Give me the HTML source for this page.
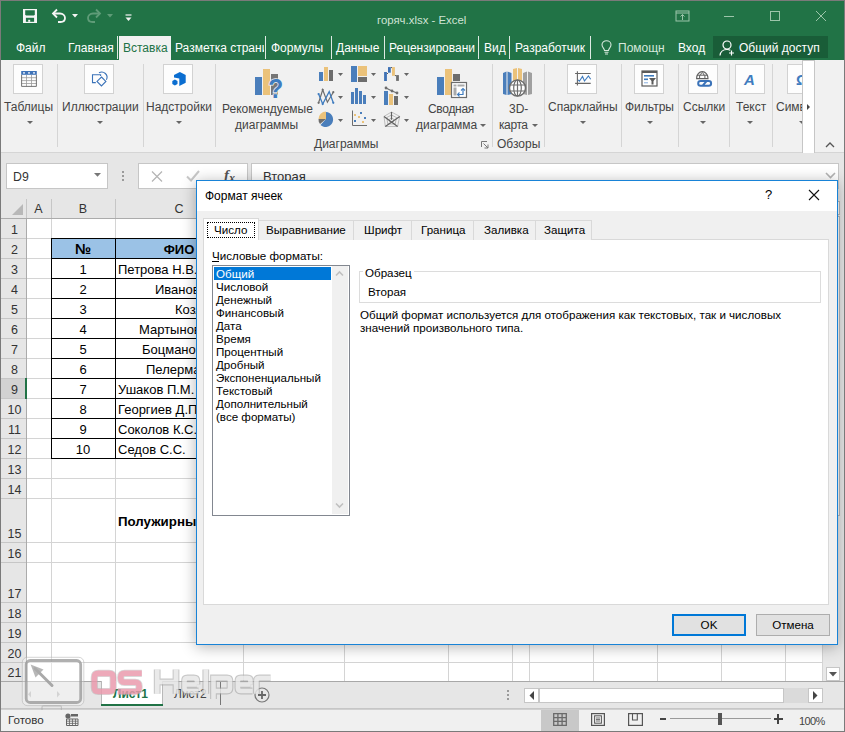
<!DOCTYPE html>
<html><head><meta charset="utf-8">
<style>
*{box-sizing:border-box;margin:0;padding:0}
html,body{width:845px;height:732px;overflow:hidden;background:#fff}
body{position:relative;font-family:"Liberation Sans",sans-serif;font-size:12px;color:#222}
.a{position:absolute}
.t{position:absolute;white-space:nowrap;line-height:1}
/* title */
#title{left:0;top:0;width:845px;height:60px;background:#217346}
.tab{position:absolute;top:41px;color:#fff;font-size:12px;white-space:nowrap;line-height:14px}
.tsep{position:absolute;top:36px;width:1px;height:23px;background:#fff;opacity:.85}
/* ribbon */
#ribbon{left:0;top:60px;width:845px;height:93px;background:#f1f1f1;border-bottom:1px solid #d5d5d5}
.ibox{position:absolute;top:6px;width:30px;height:30px;background:#fdfdfd;border:1px solid #d2d2d2}
.rsep{position:absolute;top:6px;width:1px;height:83px;background:#d5d5d5}
.rl{position:absolute;color:#444;font-size:12px;white-space:nowrap;line-height:14px;text-align:center}
.dd{position:absolute;width:0;height:0;border-left:3px solid transparent;border-right:3px solid transparent;border-top:3px solid #666}
/* grid */
.hl{position:absolute;height:1px;background:#d4d4d4}
.vl{position:absolute;width:1px;background:#d4d4d4}
.rh{position:absolute;left:1px;width:25px;background:#e6e6e6;color:#333;font-size:13px;text-align:center;border-bottom:1px solid #c8c8c8;border-right:1px solid #b8b8b8}
.cell{position:absolute;font-size:13px;color:#000;white-space:nowrap;line-height:14px}
/* dialog */
#dlg{left:196px;top:180px;width:642px;height:464px;background:#f0f0f0;border:1px solid #1883d7;box-shadow:0 0 10px rgba(0,0,0,.28)}
.dt{position:absolute;font-size:11.6px;color:#000;white-space:nowrap;line-height:13px}
.dtab{position:absolute;top:39px;height:20px;background:#f0f0f0;border:1px solid #d9d9d9;border-bottom:none;font-size:11.6px;color:#000;text-align:center;line-height:18px}
</style></head><body>

<!-- TITLE BAR -->
<div id="title" class="a"></div>

<div class="t" style="left:377px;top:13px;color:#cfe3d5;font-size:11.4px;line-height:14px">горяч.xlsx - Excel</div>
<svg class="a" style="left:23px;top:9px" width="14" height="14" viewBox="0 0 14 14"><rect x="0" y="0" width="14" height="14" fill="#f6f6f6"/><path d="M2.2 1.2H11.8V5.6L11 6.4H3L2.2 5.6Z" fill="#217346"/><rect x="2.9" y="8.8" width="8.2" height="4" fill="#217346"/><rect x="5.2" y="10.8" width="2" height="2" fill="#f6f6f6"/></svg>
<svg class="a" style="left:51px;top:8px" width="16" height="15" viewBox="0 0 16 15"><path d="M2 5.5H9C12 5.5 14 7.5 14 10C14 12.5 12 14 9.5 14H7" fill="none" stroke="#f4f4f4" stroke-width="1.8"/><path d="M6 1.5L2 5.5L6 9.5" fill="none" stroke="#f4f4f4" stroke-width="1.8"/></svg>
<svg class="a" style="left:72px;top:14px" width="6" height="4" viewBox="0 0 6 4"><path d="M0 0H6L3 3.5Z" fill="#f4f4f4"/></svg>
<svg class="a" style="left:86px;top:8px" width="16" height="15" viewBox="0 0 16 15"><path d="M14 5.5H7C4 5.5 2 7.5 2 10C2 12.5 4 14 6.5 14H9" fill="none" stroke="#5f9c78" stroke-width="1.8"/><path d="M10 1.5L14 5.5L10 9.5" fill="none" stroke="#5f9c78" stroke-width="1.8"/></svg>
<svg class="a" style="left:107px;top:14px" width="6" height="4" viewBox="0 0 6 4"><path d="M0 0H6L3 3.5Z" fill="#5f9c78"/></svg>
<svg class="a" style="left:125px;top:14px" width="7" height="8" viewBox="0 0 7 8"><path d="M0.5 1H6.5" stroke="#f4f4f4" stroke-width="1.2"/><path d="M0.5 3.5H6.5L3.5 7Z" fill="#f4f4f4"/></svg>
<svg class="a" style="left:675px;top:10px" width="15" height="12" viewBox="0 0 15 12"><rect x="1" y="1" width="13" height="10" fill="none" stroke="#9cc5aa" stroke-width="1"/><path d="M1 3H14M7.5 10V4.5M5.5 6.5L7.5 4.5L9.5 6.5" fill="none" stroke="#9cc5aa" stroke-width="1"/></svg>
<div class="a" style="left:724px;top:16px;width:10px;height:1px;background:#9cc5aa"></div>
<div class="a" style="left:770px;top:11px;width:10px;height:10px;border:1px solid #9cc5aa"></div>
<svg class="a" style="left:815px;top:10px" width="12" height="12" viewBox="0 0 12 12"><path d="M1 1L11 11M11 1L1 11" stroke="#9cc5aa" stroke-width="1"/></svg>

<!-- tabs -->
<div class="tab" style="left:16px">Файл</div>
<div class="tab" style="left:68px">Главная</div>
<div class="tsep" style="left:117px"></div>
<div class="a" style="left:119px;top:36px;width:52px;height:24px;background:#f1f1f1"></div>
<div class="tab" style="left:123px;color:#217346">Вставка</div>
<div class="tab" style="left:175px;width:89px;overflow:hidden">Разметка страницы</div>
<div class="tsep" style="left:265px"></div>
<div class="tab" style="left:271px">Формулы</div>
<div class="tsep" style="left:331px"></div>
<div class="tab" style="left:336px">Данные</div>
<div class="tsep" style="left:384px"></div>
<div class="tab" style="left:389px;width:86px;overflow:hidden">Рецензирование</div>
<div class="tsep" style="left:478px"></div>
<div class="tab" style="left:484px">Вид</div>
<div class="tsep" style="left:509px"></div>
<div class="tab" style="left:515px">Разработчик</div>
<div class="tsep" style="left:590px"></div>
<svg class="a" style="left:601px;top:40px" width="11" height="15" viewBox="0 0 11 15"><path d="M3.5 10.5C3.5 8.5 1 7.5 1 4.8C1 2.5 3 0.8 5.5 0.8C8 0.8 10 2.5 10 4.8C10 7.5 7.5 8.5 7.5 10.5Z" fill="none" stroke="#d6e8dc" stroke-width="1.1"/><path d="M3.5 12.3H7.5M4 14H7" stroke="#d6e8dc" stroke-width="1.1"/></svg>
<div class="tab" style="left:618px;color:#d6e8dc">Помощн</div>
<div class="tab" style="left:678px">Вход</div>
<div class="a" style="left:713px;top:36px;width:115px;height:22px;background:#195d38"></div>
<svg class="a" style="left:719px;top:40px" width="17" height="16" viewBox="0 0 17 16"><circle cx="8" cy="5" r="4" fill="none" stroke="#fff" stroke-width="1.2"/><path d="M1 15.5C1.5 11.5 4 9.5 8 9.5C9.5 9.5 10.5 9.8 11.3 10.3" fill="none" stroke="#fff" stroke-width="1.2"/><path d="M12.5 10.5V15.5M10 13H15" stroke="#fff" stroke-width="1.2"/></svg>
<div class="tab" style="left:739px">Общий доступ</div>

<!-- RIBBON -->
<div id="ribbon" class="a"></div>
<!-- ribbon groups -->
<div class="ibox" style="left:13px;top:64px"></div>
<svg class="a" style="left:16px;top:66px" width="26" height="26" viewBox="0 0 26 26"><rect x="5.2" y="5" width="15.6" height="3.8" fill="#3f73b8"/><rect x="7" y="6.3" width="2" height="1.2" fill="#fff"/><rect x="12" y="6.3" width="2" height="1.2" fill="#fff"/><rect x="17" y="6.3" width="2" height="1.2" fill="#fff"/><path d="M10.5 8.8V20.4M15.5 8.8V20.4M5.6 11.7H20.4M5.6 14.6H20.4M5.6 17.5H20.4" stroke="#9a9a9a" stroke-width="0.8"/><path d="M5.6 8.8V20.4H20.4V8.8" fill="none" stroke="#646464" stroke-width="0.9"/></svg>
<div class="rl" style="left:4px;top:100px">Таблицы</div>
<div class="dd" style="left:27px;top:121px"></div>
<div class="rsep" style="left:57px;top:64px"></div>

<div class="ibox" style="left:84px;top:64px"></div>
<svg class="a" style="left:86px;top:66px" width="26" height="26" viewBox="0 0 26 26"><path d="M9.8 16.6H6.5V8.7H14.6V10" fill="none" stroke="#3a72b8" stroke-width="1.1"/><path d="M13 6.8A5.3 5.3 0 0 1 20.4 13.8" fill="none" stroke="#3a72b8" stroke-width="1.1"/><path d="M15.45 11L19.9 15.45L15.45 19.9L11 15.45Z" fill="none" stroke="#3a72b8" stroke-width="1.1"/></svg>
<div class="rl" style="left:62px;top:100px">Иллюстрации</div>
<div class="dd" style="left:97px;top:121px"></div>
<div class="rsep" style="left:143px;top:64px"></div>

<div class="ibox" style="left:163px;top:64px"></div>
<svg class="a" style="left:166px;top:66px" width="26" height="26" viewBox="0 0 26 26"><path d="M13.9 6L19.7 9.1V16.7L13.3 19.9V12.4L8 11.6V9.1Z" fill="#0a6dd0"/><path d="M8.9 13.5L11.5 15V18L8.9 19.5L6.3 18V15Z" fill="#0a6dd0"/></svg>
<div class="rl" style="left:146px;top:100px">Надстройки</div>
<div class="dd" style="left:176px;top:121px"></div>
<div class="rsep" style="left:215px;top:64px"></div>

<!-- recommended charts -->
<svg class="a" style="left:254px;top:68px" width="32" height="32" viewBox="0 0 32 32"><rect x="1" y="9" width="7" height="18" fill="#4a7ebb"/><rect x="9" y="1" width="7" height="26" fill="#ebc27a"/><rect x="17" y="6" width="7" height="21" fill="#767676"/><text x="14.2" y="30" textLength="15" lengthAdjust="spacingAndGlyphs" font-family="Liberation Sans" font-weight="bold" font-size="27" fill="#3f7cbf" stroke="#f1f1f1" stroke-width="1.5" paint-order="stroke">?</text></svg>
<div class="rl" style="left:222px;top:102px">Рекомендуемые</div>
<div class="rl" style="left:235px;top:118px">диаграммы</div>

<svg class="a" style="left:316px;top:64px" width="100" height="66" viewBox="0 0 100 66">
 <rect x="3" y="8" width="4" height="9" fill="#4a7ebb"/><rect x="8" y="3" width="4" height="14" fill="#ebc27a"/><rect x="13" y="6" width="4" height="11" fill="#6d6d6d"/>
 <path d="M22 9h5l-2.5 3z" fill="#666"/>
 <rect x="35" y="2" width="6" height="16" fill="#4a7ebb"/><rect x="42" y="2" width="9" height="10" fill="#ebc27a"/><rect x="42" y="13" width="9" height="5" fill="#6d6d6d"/>
 <path d="M55 9h5l-2.5 3z" fill="#666"/>
 <path d="M70.9 9.5H72M74.8 3.6H76M78.9 11.6H80" stroke="#555" stroke-width="1"/><rect x="68.1" y="8" width="2.8" height="9" fill="#3f72b5"/><rect x="72" y="3.1" width="2.8" height="5.6" fill="#3f72b5"/><rect x="76" y="3.1" width="2.9" height="8.7" fill="#ebc27a"/><rect x="80.1" y="11.1" width="2.8" height="5.8" fill="#6d6d6d"/>
 <path d="M88 9h5l-2.5 3z" fill="#666"/>
 <path d="M2.6 38.8L6.7 25.8L11.4 38.2L17.3 28.2" fill="none" stroke="#6d6d6d" stroke-width="1.2"/><path d="M2.6 30L6.7 40L13.2 27.6L17.3 38.8" fill="none" stroke="#3f7cbf" stroke-width="1.3"/><circle cx="2.6" cy="38.8" r="1.1" fill="#6d6d6d"/><circle cx="6.7" cy="25.8" r="1.1" fill="#6d6d6d"/><circle cx="17.3" cy="28.2" r="1.1" fill="#6d6d6d"/><circle cx="2.6" cy="30" r="1.1" fill="#3f7cbf"/><circle cx="6.7" cy="40" r="1.1" fill="#3f7cbf"/><circle cx="17.3" cy="38.8" r="1.1" fill="#3f7cbf"/>
 <path d="M22 32h5l-2.5 3z" fill="#666"/>
 <rect x="35" y="28" width="3" height="12" fill="#4a7ebb"/><rect x="39" y="24" width="3" height="16" fill="#4a7ebb"/><rect x="43" y="27" width="3" height="13" fill="#4a7ebb"/><rect x="47" y="31" width="3" height="9" fill="#4a7ebb"/>
 <path d="M55 32h5l-2.5 3z" fill="#666"/>
 <rect x="68" y="27" width="4" height="14" fill="#4a7ebb"/><rect x="73" y="30" width="4" height="11" fill="#ebc27a"/><rect x="78" y="32" width="4" height="9" fill="#6d6d6d"/><path d="M70 24L76 27L81 29" fill="none" stroke="#6d6d6d" stroke-width="1.3"/><circle cx="70" cy="24" r="1.4" fill="#6d6d6d"/><circle cx="76" cy="27" r="1.4" fill="#6d6d6d"/><circle cx="81" cy="29" r="1.4" fill="#6d6d6d"/>
 <path d="M88 32h5l-2.5 3z" fill="#666"/>
 <path d="M10 55L10 48A7.5 7.5 0 1 1 4.5 61Z" fill="#4a7ebb"/><path d="M10 55L2.5 55A7.5 7.5 0 0 1 10 47.5Z" fill="#ebc27a"/><path d="M10 55L4 60A7.5 7.5 0 0 1 2.5 55Z" fill="#6d6d6d"/>
 <path d="M22 55h5l-2.5 3z" fill="#666"/>
 <path d="M36.5 46.5V61.5H51" fill="none" stroke="#6d6d6d" stroke-width="1"/><rect x="38" y="50" width="2" height="2" fill="#ebc27a"/><rect x="44" y="48" width="2" height="2" fill="#4a7ebb"/><rect x="42" y="52" width="2" height="2" fill="#ebc27a"/><rect x="48" y="53" width="2" height="2" fill="#4a7ebb"/><rect x="38" y="56" width="2" height="2" fill="#4a7ebb"/><rect x="46" y="57" width="2" height="2" fill="#ebc27a"/>
 <path d="M55 55h5l-2.5 3z" fill="#666"/>
 <path d="M75.5 48L83.7 52.4L81.6 62.5H69.3L68 52.4Z" fill="none" stroke="#b0b0b0" stroke-width=".8"/><path d="M75.5 51L80.5 53.5L79.2 60H71.8L70.8 53.5Z M75.5 54L77.8 55.3L77.2 58H73.8L73.3 55.3Z" fill="none" stroke="#a0a0a0" stroke-width=".7"/><path d="M75.5 48V55.8M68 52.4L81.6 62.5M83.7 52.4L69.3 62.5" stroke="#606060" stroke-width="1.2"/>
 <path d="M88 55h5l-2.5 3z" fill="#666"/>
</svg>
<div class="rl" style="left:314px;top:137px">Диаграммы</div>

<!-- pivot chart -->
<svg class="a" style="left:436px;top:68px" width="32" height="31" viewBox="0 0 32 31"><rect x="1" y="9" width="7" height="18" fill="#4a7ebb"/><rect x="9" y="1" width="7" height="26" fill="#ebc27a"/><rect x="17" y="6" width="7" height="7" fill="#6d6d6d"/><rect x="15.5" y="14.5" width="15" height="15" fill="#fff" stroke="#6d6d6d" stroke-width="1.2"/><rect x="17.5" y="16.5" width="3" height="2" fill="#aaa"/><rect x="21.5" y="16.5" width="7" height="2" fill="#aaa"/><rect x="17.5" y="19.5" width="3" height="8" fill="#aaa"/><path d="M22 26.5H27V21" fill="none" stroke="#3f7cbf" stroke-width="1.2"/><path d="M25 22.5l2-2 2 2M23.5 24.5l-2 2 2 2" fill="none" stroke="#3f7cbf" stroke-width="1.1"/></svg>
<div class="rl" style="left:428px;top:102px;letter-spacing:-0.3px">Сводная</div>
<div class="rl" style="left:416px;top:118px">диаграмма</div>
<div class="dd" style="left:480px;top:124px"></div>
<svg class="a" style="left:481px;top:141px" width="8" height="8" viewBox="0 0 8 8"><path d="M0.5 6V0.5H6" fill="none" stroke="#777" stroke-width="1"/><path d="M2.5 2.5L7 7M7 3.5V7H3.5" fill="none" stroke="#777" stroke-width="1"/></svg>
<div class="rsep" style="left:492px;top:64px"></div>

<!-- 3D map -->
<svg class="a" style="left:502px;top:67px" width="32" height="30" viewBox="0 0 32 30"><path d="M1 6L4.5 4.5V28L1 27Z M5.5 4.5L9.5 6V27L5.5 28Z" fill="#4a7ebb"/><path d="M11 2L15 1V16L11 16Z M16 1L20 2V16H16Z" fill="#ebc27a"/><path d="M21 6L25 4.5V28L21 27Z M26 4.5L30 6V27L26 28Z" fill="#a0a0a0"/><circle cx="15.5" cy="21" r="8" fill="#fff" stroke="#6d6d6d" stroke-width="1.4"/><ellipse cx="15.5" cy="21" rx="3.8" ry="8" fill="none" stroke="#6d6d6d" stroke-width="1.2"/><path d="M7.5 18H23.5M7.5 24H23.5M15.5 13V29" stroke="#6d6d6d" stroke-width="1.2"/></svg>
<div class="rl" style="left:509px;top:102px">3D-</div>
<div class="rl" style="left:499px;top:118px;letter-spacing:-0.4px">карта</div>
<div class="dd" style="left:532px;top:124px"></div>
<div class="rl" style="left:497px;top:137px">Обзоры</div>
<div class="rsep" style="left:544px;top:64px"></div>

<div class="ibox" style="left:567px;top:64px"></div>
<svg class="a" style="left:568px;top:66px" width="28" height="26" viewBox="0 0 28 26"><path d="M9.4 5.2V19.5M7.1 7.5H22.7M7.1 17.4H22.7" stroke="#666" stroke-width="1.1"/><path d="M10 13.8L11.4 15.2L14.5 10.5L16.5 15L20.4 10L22.7 13.3" fill="none" stroke="#3f7cbf" stroke-width="1.1"/></svg>
<div class="rl" style="left:548px;top:100px">Спарклайны</div>
<div class="dd" style="left:580px;top:121px"></div>
<div class="rsep" style="left:621px;top:64px"></div>

<div class="ibox" style="left:634px;top:64px"></div>
<svg class="a" style="left:641px;top:70px" width="17" height="17" viewBox="0 0 17 17"><rect x="1" y="1" width="15" height="15" fill="#fff" stroke="#5a5a5a" stroke-width="1.2"/><rect x="1" y="1" width="15" height="2" fill="#5a5a5a"/><rect x="3" y="5" width="10" height="1.6" fill="#3f7cbf"/><rect x="3" y="8.5" width="4" height="1.6" fill="#3f7cbf"/><rect x="3" y="12" width="4" height="1.4" fill="#a9c5e8"/><path d="M8 8H15L12.5 11V14.5H10.5V11Z" fill="#5a5a5a"/></svg>
<div class="rl" style="left:625px;top:100px">Фильтры</div>
<div class="dd" style="left:647px;top:121px"></div>
<div class="rsep" style="left:678px;top:64px"></div>

<div class="ibox" style="left:688px;top:64px"></div>
<svg class="a" style="left:692px;top:66px" width="24" height="24" viewBox="0 0 24 24"><path d="M4.6 12.6A5.7 7 0 0 1 16 12.6Z" fill="none" stroke="#606060" stroke-width="1.1"/><path d="M4.8 9.2H15.8M7.6 9.2V12.6M12.9 9.2V12.6M8.4 9.2Q10.3 4 12.1 9.2" fill="none" stroke="#606060" stroke-width="1"/><path d="M8.6 15.1H16.7Q19.1 15.1 19.1 17.4Q19.1 19.7 16.7 19.7H8.6Q6.2 19.7 6.2 17.4Q6.2 15.1 8.6 15.1Z M10.6 19.7L14.6 15.1" fill="none" stroke="#3a72b8" stroke-width="2"/></svg>
<div class="rl" style="left:683px;top:100px">Ссылки</div>
<div class="dd" style="left:700px;top:121px"></div>
<div class="rsep" style="left:729px;top:64px"></div>

<div class="ibox" style="left:735px;top:64px"></div>
<div class="t" style="left:744px;top:72px;font-size:15px;font-weight:bold;font-style:italic;color:#3f7cbf">A</div>
<div class="rl" style="left:736px;top:100px">Текст</div>
<div class="dd" style="left:747px;top:121px"></div>
<div class="rsep" style="left:772px;top:64px"></div>

<div class="ibox" style="left:787px;top:64px;width:18px;border-right:none"></div>
<div class="t" style="left:796px;top:72px;font-size:15px;font-weight:bold;color:#3f7cbf">Ω</div>
<div class="rl" style="left:776px;top:100px">Симв</div>
<div class="dd" style="left:799px;top:121px"></div>
<div class="a" style="left:802px;top:60px;width:13px;height:93px;background:#fff;border:1px solid #c6c6c6;border-bottom:none"></div>
<svg class="a" style="left:806px;top:103px" width="5" height="8" viewBox="0 0 5 8"><path d="M1 1L4 4L1 7Z" fill="#444"/></svg>
<svg class="a" style="left:825px;top:141px" width="10" height="7" viewBox="0 0 10 7"><path d="M1 6L5 2L9 6" fill="none" stroke="#555" stroke-width="1.3"/></svg>


<!-- FORMULA AREA -->
<div class="a" style="left:1px;top:153px;width:843px;height:46px;background:#e6e6e6"></div>
<div class="a" style="left:6px;top:163px;width:102px;height:26px;background:#fff;border:1px solid #c6c6c6"></div>
<div class="t" style="left:13px;top:170px;font-size:12.3px;line-height:14px;color:#333">D9</div>
<svg class="a" style="left:94px;top:173px" width="8" height="4" viewBox="0 0 8 4"><path d="M0 0H7L3.5 3.8Z" fill="#777"/></svg>
<div class="a" style="left:122px;top:171px;width:2px;height:2px;background:#9a9a9a"></div>
<div class="a" style="left:122px;top:175px;width:2px;height:2px;background:#9a9a9a"></div>
<div class="a" style="left:122px;top:179px;width:2px;height:2px;background:#9a9a9a"></div>
<div class="a" style="left:138px;top:163px;width:110px;height:26px;background:#fff;border:1px solid #c6c6c6"></div>
<svg class="a" style="left:151px;top:171px" width="12" height="11" viewBox="0 0 12 11"><path d="M1 0.5L11 10.5M11 0.5L1 10.5" stroke="#b4b4b4" stroke-width="1.2"/></svg>
<svg class="a" style="left:186px;top:170px" width="14" height="12" viewBox="0 0 14 12"><path d="M1 6.5L5 10.5L13 1" fill="none" stroke="#c8c8c8" stroke-width="2"/></svg>
<div class="t" style="left:224px;top:168px;font-family:'Liberation Serif',serif;font-style:italic;font-weight:bold;font-size:15px;line-height:15px;color:#555">f<span style="font-size:12px;position:relative;top:2px">x</span></div>
<div class="a" style="left:251px;top:163px;width:588px;height:26px;background:#fff;border:1px solid #c6c6c6"></div>
<div class="t" style="left:263px;top:170px;font-size:13px;line-height:14px;color:#333">Вторая</div>
<svg class="a" style="left:825px;top:172px" width="11" height="7" viewBox="0 0 11 7"><path d="M1 1L5.5 5.5L10 1" fill="none" stroke="#b4b4b4" stroke-width="1.6"/></svg>

<!-- GRID -->
<div class="a" style="left:1px;top:199px;width:822px;height:482px;background:#fff"></div>
<div class="a" style="left:1px;top:199px;width:822px;height:19px;background:#e6e6e6"></div>
<div class="a" style="left:51px;top:218px;width:1px;height:463px;background:#d4d4d4"></div>
<div class="a" style="left:115px;top:218px;width:1px;height:463px;background:#d4d4d4"></div>
<div class="a" style="left:243px;top:218px;width:1px;height:463px;background:#d4d4d4"></div>
<div class="a" style="left:344px;top:218px;width:1px;height:463px;background:#d4d4d4"></div>
<div class="a" style="left:448px;top:218px;width:1px;height:463px;background:#d4d4d4"></div>
<div class="a" style="left:512px;top:218px;width:1px;height:463px;background:#d4d4d4"></div>
<div class="a" style="left:529px;top:218px;width:1px;height:463px;background:#d4d4d4"></div>
<div class="a" style="left:593px;top:218px;width:1px;height:463px;background:#d4d4d4"></div>
<div class="a" style="left:657px;top:218px;width:1px;height:463px;background:#d4d4d4"></div>
<div class="a" style="left:721px;top:218px;width:1px;height:463px;background:#d4d4d4"></div>
<div class="a" style="left:785px;top:218px;width:1px;height:463px;background:#d4d4d4"></div>
<div class="a" style="left:26px;top:238px;width:797px;height:1px;background:#d4d4d4"></div>
<div class="a" style="left:26px;top:258px;width:797px;height:1px;background:#d4d4d4"></div>
<div class="a" style="left:26px;top:278px;width:797px;height:1px;background:#d4d4d4"></div>
<div class="a" style="left:26px;top:298px;width:797px;height:1px;background:#d4d4d4"></div>
<div class="a" style="left:26px;top:318px;width:797px;height:1px;background:#d4d4d4"></div>
<div class="a" style="left:26px;top:338px;width:797px;height:1px;background:#d4d4d4"></div>
<div class="a" style="left:26px;top:358px;width:797px;height:1px;background:#d4d4d4"></div>
<div class="a" style="left:26px;top:378px;width:797px;height:1px;background:#d4d4d4"></div>
<div class="a" style="left:26px;top:398px;width:797px;height:1px;background:#d4d4d4"></div>
<div class="a" style="left:26px;top:418px;width:797px;height:1px;background:#d4d4d4"></div>
<div class="a" style="left:26px;top:438px;width:797px;height:1px;background:#d4d4d4"></div>
<div class="a" style="left:26px;top:458px;width:797px;height:1px;background:#d4d4d4"></div>
<div class="a" style="left:26px;top:478px;width:797px;height:1px;background:#d4d4d4"></div>
<div class="a" style="left:26px;top:498px;width:797px;height:1px;background:#d4d4d4"></div>
<div class="a" style="left:26px;top:542px;width:797px;height:1px;background:#d4d4d4"></div>
<div class="a" style="left:26px;top:562px;width:797px;height:1px;background:#d4d4d4"></div>
<div class="a" style="left:26px;top:602px;width:797px;height:1px;background:#d4d4d4"></div>
<div class="a" style="left:26px;top:622px;width:797px;height:1px;background:#d4d4d4"></div>
<div class="a" style="left:26px;top:642px;width:797px;height:1px;background:#d4d4d4"></div>
<div class="a" style="left:26px;top:662px;width:797px;height:1px;background:#d4d4d4"></div>
<div class="a" style="left:26px;top:199px;width:1px;height:19px;background:#c6c6c6"></div>
<div class="a" style="left:51px;top:199px;width:1px;height:19px;background:#c6c6c6"></div>
<div class="a" style="left:115px;top:199px;width:1px;height:19px;background:#c6c6c6"></div>
<div class="a" style="left:243px;top:199px;width:1px;height:19px;background:#c6c6c6"></div>
<div class="a" style="left:344px;top:199px;width:1px;height:19px;background:#c6c6c6"></div>
<div class="a" style="left:449px;top:199px;width:1px;height:19px;background:#c6c6c6"></div>
<div class="a" style="left:513px;top:199px;width:1px;height:19px;background:#c6c6c6"></div>
<div class="a" style="left:530px;top:199px;width:1px;height:19px;background:#c6c6c6"></div>
<div class="a" style="left:594px;top:199px;width:1px;height:19px;background:#c6c6c6"></div>
<div class="a" style="left:658px;top:199px;width:1px;height:19px;background:#c6c6c6"></div>
<div class="a" style="left:722px;top:199px;width:1px;height:19px;background:#c6c6c6"></div>
<div class="a" style="left:786px;top:199px;width:1px;height:19px;background:#c6c6c6"></div>
<div class="a" style="left:1px;top:218px;width:822px;height:1px;background:#ababab"></div>
<div class="a" style="left:1px;top:219px;width:25px;height:462px;background:#e6e6e6"></div>
<div class="a" style="left:1px;top:378px;width:25px;height:20px;background:#d2d2d2"></div>
<div class="a" style="left:1px;top:238px;width:25px;height:1px;background:#c6c6c6"></div>
<div class="a" style="left:1px;top:258px;width:25px;height:1px;background:#c6c6c6"></div>
<div class="a" style="left:1px;top:278px;width:25px;height:1px;background:#c6c6c6"></div>
<div class="a" style="left:1px;top:298px;width:25px;height:1px;background:#c6c6c6"></div>
<div class="a" style="left:1px;top:318px;width:25px;height:1px;background:#c6c6c6"></div>
<div class="a" style="left:1px;top:338px;width:25px;height:1px;background:#c6c6c6"></div>
<div class="a" style="left:1px;top:358px;width:25px;height:1px;background:#c6c6c6"></div>
<div class="a" style="left:1px;top:378px;width:25px;height:1px;background:#c6c6c6"></div>
<div class="a" style="left:1px;top:398px;width:25px;height:1px;background:#c6c6c6"></div>
<div class="a" style="left:1px;top:418px;width:25px;height:1px;background:#c6c6c6"></div>
<div class="a" style="left:1px;top:438px;width:25px;height:1px;background:#c6c6c6"></div>
<div class="a" style="left:1px;top:458px;width:25px;height:1px;background:#c6c6c6"></div>
<div class="a" style="left:1px;top:478px;width:25px;height:1px;background:#c6c6c6"></div>
<div class="a" style="left:1px;top:498px;width:25px;height:1px;background:#c6c6c6"></div>
<div class="a" style="left:1px;top:542px;width:25px;height:1px;background:#c6c6c6"></div>
<div class="a" style="left:1px;top:562px;width:25px;height:1px;background:#c6c6c6"></div>
<div class="a" style="left:1px;top:602px;width:25px;height:1px;background:#c6c6c6"></div>
<div class="a" style="left:1px;top:622px;width:25px;height:1px;background:#c6c6c6"></div>
<div class="a" style="left:1px;top:642px;width:25px;height:1px;background:#c6c6c6"></div>
<div class="a" style="left:1px;top:662px;width:25px;height:1px;background:#c6c6c6"></div>
<div class="a" style="left:26px;top:219px;width:1px;height:462px;background:#ababab"></div>
<div class="a" style="left:25px;top:378px;width:2px;height:21px;background:#217346"></div>
<div class="t" style="left:2px;width:25px;text-align:center;top:224px;font-size:12.5px;color:#333">1</div>
<div class="t" style="left:2px;width:25px;text-align:center;top:244px;font-size:12.5px;color:#333">2</div>
<div class="t" style="left:2px;width:25px;text-align:center;top:264px;font-size:12.5px;color:#333">3</div>
<div class="t" style="left:2px;width:25px;text-align:center;top:284px;font-size:12.5px;color:#333">4</div>
<div class="t" style="left:2px;width:25px;text-align:center;top:304px;font-size:12.5px;color:#333">5</div>
<div class="t" style="left:2px;width:25px;text-align:center;top:324px;font-size:12.5px;color:#333">6</div>
<div class="t" style="left:2px;width:25px;text-align:center;top:344px;font-size:12.5px;color:#333">7</div>
<div class="t" style="left:2px;width:25px;text-align:center;top:364px;font-size:12.5px;color:#333">8</div>
<div class="t" style="left:2px;width:25px;text-align:center;top:384px;font-size:12.5px;color:#333">9</div>
<div class="t" style="left:2px;width:25px;text-align:center;top:404px;font-size:12.5px;color:#333">10</div>
<div class="t" style="left:2px;width:25px;text-align:center;top:424px;font-size:12.5px;color:#333">11</div>
<div class="t" style="left:2px;width:25px;text-align:center;top:444px;font-size:12.5px;color:#333">12</div>
<div class="t" style="left:2px;width:25px;text-align:center;top:464px;font-size:12.5px;color:#333">13</div>
<div class="t" style="left:2px;width:25px;text-align:center;top:484px;font-size:12.5px;color:#333">14</div>
<div class="t" style="left:2px;width:25px;text-align:center;top:528px;font-size:12.5px;color:#333">15</div>
<div class="t" style="left:2px;width:25px;text-align:center;top:548px;font-size:12.5px;color:#333">16</div>
<div class="t" style="left:2px;width:25px;text-align:center;top:588px;font-size:12.5px;color:#333">17</div>
<div class="t" style="left:2px;width:25px;text-align:center;top:608px;font-size:12.5px;color:#333">18</div>
<div class="t" style="left:2px;width:25px;text-align:center;top:628px;font-size:12.5px;color:#333">19</div>
<div class="t" style="left:2px;width:25px;text-align:center;top:648px;font-size:12.5px;color:#333">20</div>
<div class="t" style="left:2px;width:25px;text-align:center;top:667px;font-size:12.5px;color:#333">21</div>
<svg class="a" style="left:11px;top:203px" width="13" height="13" viewBox="0 0 13 13"><path d="M12 1V12H1Z" fill="#b8b8b8"/></svg>
<div class="t" style="left:26px;width:25px;text-align:center;top:203px;font-size:12.5px;color:#333">A</div>
<div class="t" style="left:51px;width:64px;text-align:center;top:203px;font-size:12.5px;color:#333">B</div>
<div class="t" style="left:115px;width:128px;text-align:center;top:203px;font-size:12.5px;color:#333">C</div>
<div class="a" style="left:52px;top:239px;width:191px;height:19px;background:#9bc2e6"></div>
<div class="a" style="left:51px;top:238px;width:193px;height:1px;background:#000"></div>
<div class="a" style="left:51px;top:258px;width:193px;height:1px;background:#000"></div>
<div class="a" style="left:51px;top:278px;width:193px;height:1px;background:#000"></div>
<div class="a" style="left:51px;top:298px;width:193px;height:1px;background:#000"></div>
<div class="a" style="left:51px;top:318px;width:193px;height:1px;background:#000"></div>
<div class="a" style="left:51px;top:338px;width:193px;height:1px;background:#000"></div>
<div class="a" style="left:51px;top:358px;width:193px;height:1px;background:#000"></div>
<div class="a" style="left:51px;top:378px;width:193px;height:1px;background:#000"></div>
<div class="a" style="left:51px;top:398px;width:193px;height:1px;background:#000"></div>
<div class="a" style="left:51px;top:418px;width:193px;height:1px;background:#000"></div>
<div class="a" style="left:51px;top:438px;width:193px;height:1px;background:#000"></div>
<div class="a" style="left:51px;top:458px;width:193px;height:1px;background:#000"></div>
<div class="a" style="left:51px;top:238px;width:1px;height:221px;background:#000"></div>
<div class="a" style="left:115px;top:238px;width:1px;height:221px;background:#000"></div>
<div class="a" style="left:243px;top:238px;width:1px;height:221px;background:#000"></div>
<div class="cell" style="left:51px;width:64px;text-align:center;top:242px;font-weight:bold;font-size:14.5px">№</div>
<div class="cell" style="left:115px;width:128px;text-align:center;top:243px;font-weight:bold">ФИО</div>
<div class="cell" style="left:51px;width:64px;text-align:center;top:263px">1</div>
<div class="cell" style="left:118px;top:263px">Петрова Н.В.</div>
<div class="cell" style="left:51px;width:64px;text-align:center;top:283px">2</div>
<div class="cell" style="left:155px;top:283px">Иванов И.И.</div>
<div class="cell" style="left:51px;width:64px;text-align:center;top:303px">3</div>
<div class="cell" style="left:175px;top:303px">Козлов А.А.</div>
<div class="cell" style="left:51px;width:64px;text-align:center;top:323px">4</div>
<div class="cell" style="left:139px;top:323px">Мартынова Е.С.</div>
<div class="cell" style="left:51px;width:64px;text-align:center;top:343px">5</div>
<div class="cell" style="left:142px;top:343px">Боцманова Л.И.</div>
<div class="cell" style="left:51px;width:64px;text-align:center;top:363px">6</div>
<div class="cell" style="left:146px;top:363px">Пелерман Е.В.</div>
<div class="cell" style="left:51px;width:64px;text-align:center;top:383px">7</div>
<div class="cell" style="left:118px;top:383px">Ушаков П.М.</div>
<div class="cell" style="left:51px;width:64px;text-align:center;top:403px">8</div>
<div class="cell" style="left:118px;top:403px">Георгиев Д.П.</div>
<div class="cell" style="left:51px;width:64px;text-align:center;top:423px">9</div>
<div class="cell" style="left:118px;top:423px">Соколов К.С.</div>
<div class="cell" style="left:51px;width:64px;text-align:center;top:443px">10</div>
<div class="cell" style="left:118px;top:443px">Седов С.С.</div>
<div class="cell" style="left:118px;top:515px;font-weight:bold;font-size:13.3px">Полужирный</div>

<!-- SHEET TABS BAR -->
<!-- vertical scrollbar -->
<div class="a" style="left:822px;top:199px;width:18px;height:482px;background:#e8e8e8;border-left:1px solid #d4d4d4"></div>
<div class="a" style="left:826px;top:201px;width:14px;height:14px;background:#fff;border:1px solid #b8b8b8"></div>
<div class="a" style="left:826px;top:216px;width:14px;height:300px;background:#fff;border:1px solid #b8b8b8"></div>
<div class="a" style="left:826px;top:667px;width:14px;height:14px;background:#fff;border:1px solid #c6c6c6"></div>
<svg class="a" style="left:829px;top:672px" width="8" height="5" viewBox="0 0 8 5"><path d="M0 0H8L4 4.5Z" fill="#555"/></svg>
<div class="a" style="left:840px;top:199px;width:4px;height:510px;background:#e6e6e6"></div>
<div class="a" style="left:1px;top:681px;width:843px;height:28px;background:#e6e6e6;border-top:1px solid #a8a8a8;border-bottom:1px solid #c6c6c6"></div>
<div class="a" style="left:101px;top:681px;width:62px;height:25px;background:#fff;border:1px solid #b8b8b8;border-top:none"></div>
<div class="a" style="left:101px;top:704px;width:62px;height:2px;background:#217346"></div>
<div class="t" style="left:113px;top:687px;font-size:12px;line-height:14px;font-weight:bold;color:#217346">Лист1</div>
<div class="t" style="left:174px;top:687px;font-size:12px;line-height:14px;color:#444">Лист2</div>
<div class="a" style="left:220px;top:682px;width:1px;height:23px;background:#777"></div>
<svg class="a" style="left:254px;top:687px" width="16" height="16" viewBox="0 0 16 16"><circle cx="8" cy="8" r="7" fill="none" stroke="#777" stroke-width="1.2"/><path d="M8 4V12M4 8H12" stroke="#666" stroke-width="1.8"/></svg>
<div class="a" style="left:507px;top:690px;width:2px;height:2px;background:#9a9a9a"></div>
<div class="a" style="left:507px;top:694px;width:2px;height:2px;background:#9a9a9a"></div>
<div class="a" style="left:507px;top:698px;width:2px;height:2px;background:#9a9a9a"></div>
<div class="a" style="left:524px;top:688px;width:299px;height:15px;background:#dadada"></div>
<div class="a" style="left:524px;top:688px;width:15px;height:15px;background:#fff;border:1px solid #c6c6c6"></div>
<svg class="a" style="left:529px;top:691px" width="5" height="9" viewBox="0 0 5 9"><path d="M5 0V9L0.5 4.5Z" fill="#444"/></svg>
<div class="a" style="left:539px;top:688px;width:245px;height:15px;background:#fff;border:1px solid #c6c6c6"></div>
<div class="a" style="left:808px;top:688px;width:15px;height:15px;background:#fff;border:1px solid #c6c6c6"></div>
<svg class="a" style="left:813px;top:691px" width="5" height="9" viewBox="0 0 5 9"><path d="M0 0V9L4.5 4.5Z" fill="#444"/></svg>
<!-- STATUS -->
<div class="a" style="left:1px;top:709px;width:843px;height:22px;background:#f0f0f0;border-top:1px solid #d0d0d0"></div>
<div class="t" style="left:8px;top:713px;color:#333;font-size:11.6px;line-height:14px">Готово</div>
<svg class="a" style="left:65px;top:713px" width="14" height="13" viewBox="0 0 14 13"><circle cx="3" cy="3" r="2.6" fill="#666"/><rect x="6" y="1" width="7" height="2.5" fill="#666"/><path d="M1.5 6H13V12.5H1.5Z" fill="none" stroke="#666" stroke-width="1"/><path d="M4.5 6V12.5M7.5 6V12.5M10.5 6V12.5M1.5 8.2H13M1.5 10.4H13" stroke="#666" stroke-width=".8"/></svg>
<div class="a" style="left:541px;top:710px;width:38px;height:21px;background:#c8c8c8"></div>
<svg class="a" style="left:553px;top:713px" width="14" height="13" viewBox="0 0 14 13"><path d="M0.7 0.7H13.3V12.3H0.7Z M4.9 0.7V12.3M9.1 0.7V12.3M0.7 4.6H13.3M0.7 8.4H13.3" fill="none" stroke="#6a6a6a" stroke-width="1.3"/></svg>
<svg class="a" style="left:591px;top:713px" width="14" height="13" viewBox="0 0 14 13"><rect x="0.6" y="0.6" width="12.8" height="11.8" fill="none" stroke="#555" stroke-width="1.2"/><rect x="3.6" y="2.8" width="6.8" height="7.4" fill="none" stroke="#555" stroke-width="1"/><path d="M5 5H9M5 6.5H9M5 8H9" stroke="#555" stroke-width=".8"/></svg>
<svg class="a" style="left:628px;top:713px" width="15" height="13" viewBox="0 0 15 13"><rect x="0.6" y="0.6" width="13.8" height="11.8" fill="none" stroke="#555" stroke-width="1.2"/><path d="M4.5 0.6V7H9.3V0.6" fill="none" stroke="#555" stroke-width="1.1"/></svg>
<div class="a" style="left:660px;top:718px;width:6px;height:2px;background:#444"></div>
<div class="a" style="left:670px;top:718px;width:101px;height:1px;background:#9a9a9a"></div>
<div class="a" style="left:718px;top:713px;width:4px;height:12px;background:#555"></div>
<div class="a" style="left:774px;top:718px;width:9px;height:2px;background:#444"></div>
<div class="a" style="left:777px;top:714px;width:2px;height:10px;background:#444"></div>
<div class="t" style="left:799px;top:714px;color:#444;font-size:11px;line-height:14px;letter-spacing:-.6px">100%</div>

<!-- DIALOG -->
<div class="a" style="left:196px;top:180px;width:642px;height:465px;background:#f0f0f0;border:1px solid #1883d7;box-shadow:0 2px 14px rgba(0,0,0,.30)"></div>
<div class="a" style="left:197px;top:181px;width:640px;height:30px;background:#fff"></div>
<div class="t" style="left:205px;top:189px;font-size:12px;line-height:14px;color:#000">Формат ячеек</div>
<div class="t" style="left:765px;top:188px;font-size:13px;line-height:14px;color:#000">?</div>
<svg class="a" style="left:808px;top:189px" width="12" height="12" viewBox="0 0 12 12"><path d="M1 1L11 11M11 1L1 11" stroke="#111" stroke-width="1.1"/></svg>
<div class="a" style="left:203px;top:239px;width:626px;height:366px;background:#fff;border:1px solid #d9d9d9"></div>
<div class="a" style="left:258px;top:220px;width:97px;height:20px;background:#f0f0f0;border:1px solid #d9d9d9;border-bottom:none"></div>
<div class="dt" style="left:266px;top:223px">Выравнивание</div>
<div class="a" style="left:353px;top:220px;width:60px;height:20px;background:#f0f0f0;border:1px solid #d9d9d9;border-bottom:none"></div>
<div class="dt" style="left:364px;top:223px">Шрифт</div>
<div class="a" style="left:411px;top:220px;width:64px;height:20px;background:#f0f0f0;border:1px solid #d9d9d9;border-bottom:none"></div>
<div class="dt" style="left:421px;top:223px">Граница</div>
<div class="a" style="left:473px;top:220px;width:64px;height:20px;background:#f0f0f0;border:1px solid #d9d9d9;border-bottom:none"></div>
<div class="dt" style="left:484px;top:223px">Заливка</div>
<div class="a" style="left:535px;top:220px;width:57px;height:20px;background:#f0f0f0;border:1px solid #d9d9d9;border-bottom:none"></div>
<div class="dt" style="left:544px;top:223px">Защита</div>
<div class="a" style="left:203px;top:218px;width:56px;height:22px;background:#fff;border:1px solid #d9d9d9;border-bottom:none"></div>
<div class="a" style="left:207px;top:222px;width:48px;height:16px;border:1px dotted #000"></div>
<div class="dt" style="left:214px;top:223px">Число</div>
<div class="dt" style="left:212px;top:249px">Числовые форматы:</div>
<div class="a" style="left:212px;top:261px;width:7px;height:1px;background:#000"></div>
<div class="a" style="left:212px;top:265px;width:138px;height:251px;background:#fff;border:1px solid #828790"></div>
<div class="a" style="left:214px;top:267px;width:117px;height:13px;background:#0078d7"></div>
<div class="dt" style="left:216px;top:267px;color:#fff">Общий</div>
<div class="dt" style="left:216px;top:280px;color:#000">Числовой</div>
<div class="dt" style="left:216px;top:293px;color:#000">Денежный</div>
<div class="dt" style="left:216px;top:306px;color:#000">Финансовый</div>
<div class="dt" style="left:216px;top:319px;color:#000">Дата</div>
<div class="dt" style="left:216px;top:332px;color:#000">Время</div>
<div class="dt" style="left:216px;top:345px;color:#000">Процентный</div>
<div class="dt" style="left:216px;top:358px;color:#000">Дробный</div>
<div class="dt" style="left:216px;top:371px;color:#000">Экспоненциальный</div>
<div class="dt" style="left:216px;top:384px;color:#000">Текстовый</div>
<div class="dt" style="left:216px;top:397px;color:#000">Дополнительный</div>
<div class="dt" style="left:216px;top:410px;color:#000">(все форматы)</div>
<div class="a" style="left:332px;top:266px;width:16px;height:248px;background:#f0f0f0"></div>
<svg class="a" style="left:335px;top:270px" width="9" height="7" viewBox="0 0 9 7"><path d="M1 5.5L4.5 2L8 5.5" fill="none" stroke="#c0c0c0" stroke-width="1.6"/></svg>
<svg class="a" style="left:335px;top:502px" width="9" height="7" viewBox="0 0 9 7"><path d="M1 1.5L4.5 5L8 1.5" fill="none" stroke="#c0c0c0" stroke-width="1.6"/></svg>
<div class="a" style="left:359px;top:271px;width:462px;height:32px;border:1px solid #dcdcdc"></div>
<div class="a" style="left:363px;top:266px;width:51px;height:10px;background:#fff"></div>
<div class="dt" style="left:365px;top:266px">Образец</div>
<div class="dt" style="left:368px;top:285px">Вторая</div>
<div class="dt" style="left:360px;top:308px">Общий формат используется для отображения как текстовых, так и числовых</div>
<div class="dt" style="left:360px;top:321px">значений произвольного типа.</div>
<div class="a" style="left:672px;top:614px;width:74px;height:22px;background:#e1e1e1;border:2px solid #0078d7"></div>
<div class="dt" style="left:672px;width:74px;text-align:center;top:618px">OK</div>
<div class="a" style="left:756px;top:614px;width:74px;height:22px;background:#e1e1e1;border:1px solid #adadad"></div>
<div class="dt" style="left:756px;width:74px;text-align:center;top:618px">Отмена</div>
<!-- WATERMARK -->
<svg class="a" style="left:0;top:640px" width="300" height="80" viewBox="0 640 300 80">
 <rect x="22.3" y="657.3" width="61.5" height="48.3" rx="5" fill="rgba(255,255,255,0.25)" stroke="rgba(170,170,170,0.55)" stroke-width="0.9"/>
 <rect x="26.2" y="660.5" width="54.5" height="42" rx="4" fill="rgba(255,255,255,0.2)" stroke="rgba(150,150,150,0.75)" stroke-width="2.8"/>
 <path d="M52 685.5L35 668.5" stroke="rgba(160,160,160,0.9)" stroke-width="3" stroke-linecap="round"/>
 <path d="M30.6 664.6L43.5 669.5L35.5 677.5Z" fill="rgba(170,170,170,0.85)"/>
 <path d="M31 691L28 694.2L31 697.5Z" fill="rgba(200,200,200,0.7)"/>
 <path d="M57 691L60 694.2L57 697.5Z" fill="rgba(200,200,200,0.7)"/>
 <path d="M42 710V707Q42 705.8 43.2 705.8H60.2Q61.4 705.8 61.4 707V710" fill="none" stroke="rgba(170,170,170,0.6)" stroke-width="1.2"/>
 <path d="M94.35 677.4Q94.35 673.4 98.35 673.4H109.15Q113.15 673.4 113.15 677.4V687.5Q113.15 691.5 109.15 691.5H98.35Q94.35 691.5 94.35 687.5Z M141.8 673.3H124.7Q120.7 673.3 120.7 677.3V678.3Q120.7 682.3 124.7 682.3H135.1Q139.1 682.3 139.1 686.3V687.5Q139.1 691.5 135.1 691.5H117.8" fill="none" stroke="rgba(170,170,170,0.45)" stroke-width="7.2"/>
 <path d="M94.35 677.4Q94.35 673.4 98.35 673.4H109.15Q113.15 673.4 113.15 677.4V687.5Q113.15 691.5 109.15 691.5H98.35Q94.35 691.5 94.35 687.5Z M141.8 673.3H124.7Q120.7 673.3 120.7 677.3V678.3Q120.7 682.3 124.7 682.3H135.1Q139.1 682.3 139.1 686.3V687.5Q139.1 691.5 135.1 691.5H117.8" fill="none" stroke="rgba(244,150,172,0.72)" stroke-width="5.6"/>
 <path d="M157.2 669.4V693.8M176 669.4V693.8M157.2 682H176 M196.9 684.5H184.5V681Q184.5 678 187.5 678H193.9Q196.9 678 196.9 681V684.5M184.5 684.5V688Q184.5 691 187.5 691H198.5 M205.8 669.4V693.8 M213.5 699V678H227Q230 678 230 681V688Q230 691 227 691H213.5 M250.4 684.5H237.9V681Q237.9 678 240.9 678H247.4Q250.4 678 250.4 681V684.5M237.9 684.5V688Q237.9 691 240.9 691H252.5 M256.4 693.8V681Q256.4 678 259.4 678H270.6" fill="none" stroke="rgba(165,165,165,0.6)" stroke-width="6.8"/>
 <path d="M157.2 669.4V693.8M176 669.4V693.8M157.2 682H176 M196.9 684.5H184.5V681Q184.5 678 187.5 678H193.9Q196.9 678 196.9 681V684.5M184.5 684.5V688Q184.5 691 187.5 691H198.5 M205.8 669.4V693.8 M213.5 699V678H227Q230 678 230 681V688Q230 691 227 691H213.5 M250.4 684.5H237.9V681Q237.9 678 240.9 678H247.4Q250.4 678 250.4 681V684.5M237.9 684.5V688Q237.9 691 240.9 691H252.5 M256.4 693.8V681Q256.4 678 259.4 678H270.6" fill="none" stroke="rgba(255,255,255,0.62)" stroke-width="4.6"/>
</svg>
<!-- window border -->
<div class="a" style="left:0;top:0;width:845px;height:1px;background:#7a7a7a"></div>
<div class="a" style="left:0;top:0;width:1px;height:732px;background:#7a7a7a"></div>
<div class="a" style="left:844px;top:0;width:1px;height:732px;background:#7a7a7a"></div>
<div class="a" style="left:0;top:731px;width:845px;height:1px;background:#7a7a7a"></div>
</body></html>
